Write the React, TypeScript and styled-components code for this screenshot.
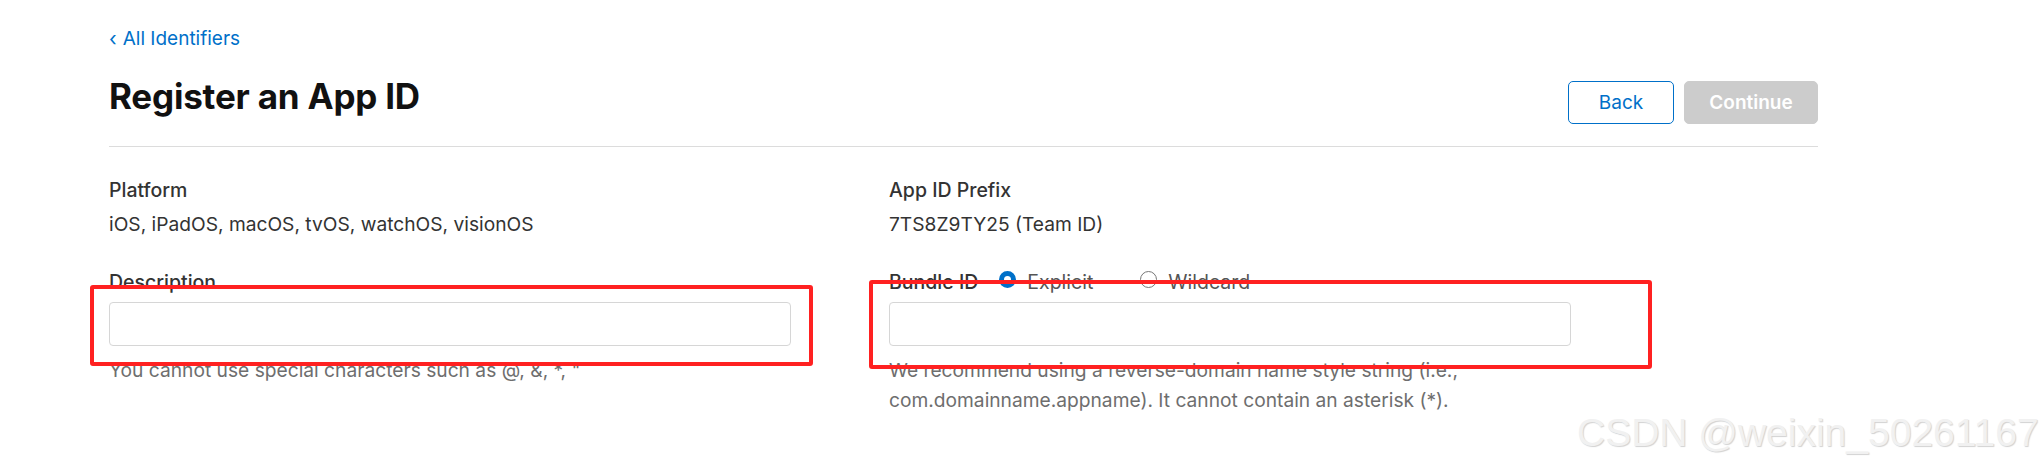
import React from "react";
import styled, { createGlobalStyle } from "styled-components";

const GlobalStyle = createGlobalStyle`
  html, body {
    margin: 0;
    padding: 0;
    background: #ffffff;
  }
  body {
    font-family: Inter, "Noto Sans", "Liberation Sans", sans-serif;
    color: #333333;
  }
  * { box-sizing: border-box; }
`;

const Canvas = styled.div`
  position: relative;
  width: 2044px;
  height: 469px;
  overflow: hidden;
  background: #ffffff;
`;

const Page = styled.main`
  width: 1709px;
  margin-left: 109px;
  padding-top: 27px;
`;

const BackLink = styled.a`
  display: inline-flex;
  align-items: center;
  gap: 6px;
  font-size: 19px;
  line-height: 24px;
  color: #0070c9;
  text-decoration: none;
`;

const Chevron = styled.span`
  font-size: 20px;
  line-height: 24px;
`;

const HeaderRow = styled.header`
  display: flex;
  justify-content: space-between;
  align-items: flex-start;
  margin-top: 25px;
  height: 71px;
  border-bottom: 1px solid #dcdcdc;
`;

const Title = styled.h1`
  margin: 0;
  font-size: 35px;
  line-height: 40px;
  font-weight: 700;
  color: #111111;
  letter-spacing: -0.2px;
`;

const Actions = styled.div`
  display: flex;
  gap: 10px;
  margin-top: 5px;
`;

const Button = styled.button<{ $primary?: boolean }>`
  height: 43px;
  width: ${(p) => (p.$primary ? "134px" : "106px")};
  border-radius: 5px;
  font-family: inherit;
  font-size: 19px;
  font-weight: ${(p) => (p.$primary ? 600 : 400)};
  border: 1px solid ${(p) => (p.$primary ? "#cccccc" : "#0070c9")};
  background: ${(p) => (p.$primary ? "#cccccc" : "#ffffff")};
  color: ${(p) => (p.$primary ? "#ffffff" : "#0070c9")};
  padding: 0;
`;

const FormGrid = styled.section`
  display: grid;
  grid-template-columns: 780px 780px;
  padding-top: 31px;
`;

const Column = styled.div`
  display: flex;
  flex-direction: column;
`;

const Label = styled.div`
  display: flex;
  align-items: center;
  font-size: 19.5px;
  line-height: 24px;
  font-weight: 500;
  color: #333333;
`;

const Value = styled.div`
  margin-top: 10px;
  font-size: 19.2px;
  line-height: 24px;
  color: #333333;
`;

const Field = styled.div`
  margin-top: 34px;
  display: flex;
  flex-direction: column;
`;

const TextInput = styled.input`
  margin-top: 8px;
  width: 682px;
  height: 44px;
  border: 1px solid #d6d6d6;
  border-radius: 4px;
  font-family: inherit;
  font-size: 18px;
  padding: 0 12px;
  outline: none;
`;

const Hint = styled.p`
  margin: 9px 0 0;
  font-size: 19.2px;
  line-height: 30px;
  color: #6e6e6e;
`;

const RadioGroup = styled.div`
  display: flex;
  align-items: center;
  margin-left: 21px;
`;

const RadioOption = styled.label<{ $gap?: number }>`
  display: flex;
  align-items: center;
  gap: 11px;
  font-weight: 400;
  color: #555555;
  margin-right: ${(p) => p.$gap ?? 0}px;
`;

const RadioDot = styled.span<{ $checked?: boolean }>`
  width: 17px;
  height: 17px;
  border-radius: 50%;
  border: ${(p) => (p.$checked ? "5px solid #0070c9" : "1.5px solid #777777")};
  background: #ffffff;
  margin-top: -6px;
`;

const Annotation = styled.div<{ $l: number; $t: number; $w: number; $h: number }>`
  position: absolute;
  left: ${(p) => p.$l}px;
  top: ${(p) => p.$t}px;
  width: ${(p) => p.$w}px;
  height: ${(p) => p.$h}px;
  border: 4px solid #ff2121;
  border-radius: 3px;
  pointer-events: none;
`;

const Watermark = styled.div`
  position: absolute;
  left: 1577px;
  top: 411px;
  font-family: "Liberation Sans", Arial, sans-serif;
  font-size: 39px;
  line-height: 44px;
  color: #f1f1f1;
  text-shadow: 1px 1px 1px rgba(0, 0, 0, 0.18);
  white-space: nowrap;
`;

export default function App() {
  return (
    <Canvas>
      <GlobalStyle />
      <Page>
        <BackLink href="#">
          <Chevron>‹</Chevron>All Identifiers
        </BackLink>
        <HeaderRow>
          <Title>Register an App ID</Title>
          <Actions>
            <Button type="button">Back</Button>
            <Button type="button" $primary disabled>
              Continue
            </Button>
          </Actions>
        </HeaderRow>
        <FormGrid>
          <Column>
            <Label>Platform</Label>
            <Value>iOS, iPadOS, macOS, tvOS, watchOS, visionOS</Value>
            <Field>
              <Label>Description</Label>
              <TextInput type="text" />
              <Hint>You cannot use special characters such as @, &amp;, *, "</Hint>
            </Field>
          </Column>
          <Column>
            <Label>App ID Prefix</Label>
            <Value>7TS8Z9TY25 (Team ID)</Value>
            <Field>
              <Label>
                Bundle ID
                <RadioGroup>
                  <RadioOption $gap={47}>
                    <RadioDot $checked />
                    Explicit
                  </RadioOption>
                  <RadioOption>
                    <RadioDot />
                    Wildcard
                  </RadioOption>
                </RadioGroup>
              </Label>
              <TextInput type="text" />
              <Hint>
                We recommend using a reverse-domain name style string (i.e.,
                <br />
                com.domainname.appname). It cannot contain an asterisk (*).
              </Hint>
            </Field>
          </Column>
        </FormGrid>
      </Page>
      <Annotation $l={90} $t={285} $w={723} $h={81} />
      <Annotation $l={869} $t={280} $w={783} $h={89} />
      <Watermark>CSDN @weixin_50261167</Watermark>
    </Canvas>
  );
}
